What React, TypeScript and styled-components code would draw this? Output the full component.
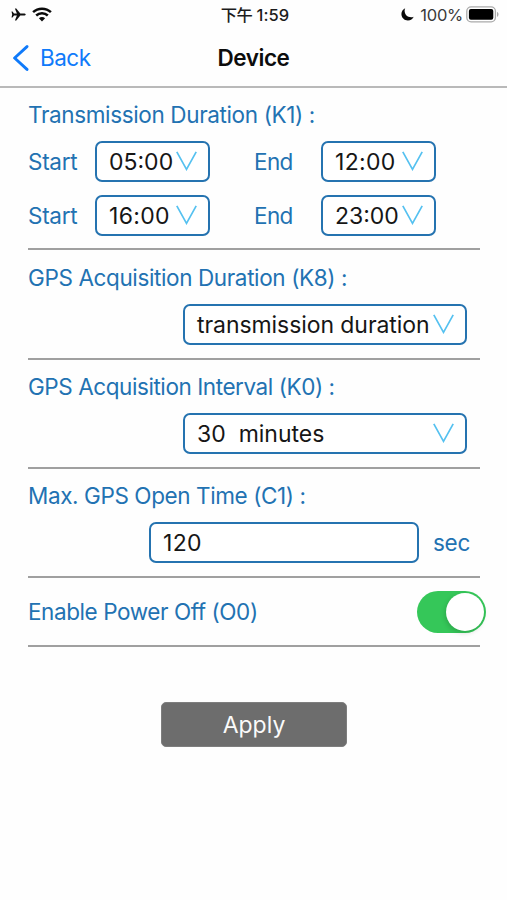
import React, { useState } from 'react';
import styled, { createGlobalStyle } from 'styled-components';

const Global = createGlobalStyle`
  * { box-sizing: border-box; }
  html, body { margin: 0; background: #fefefe; }
  body { font-family: Inter, "Noto Sans CJK TC", "Liberation Sans", sans-serif; }
`;

const Screen = styled.div`
  width: 507px;
  height: 900px;
  overflow: hidden;
  background: #fefefe;
  display: flex;
  flex-direction: column;
`;

const StatusBar = styled.header`
  height: 30px;
  flex: none;
  display: grid;
  grid-template-columns: 1fr auto 1fr;
  align-items: center;
  padding: 0 8px 0 11px;
  font-size: 16.5px;
  line-height: 30px;
  color: #1c1c1c;
`;

const StatusGroup = styled.div<{ $end?: boolean }>`
  display: flex;
  align-items: center;
  height: 30px;
  gap: ${(p) => (p.$end ? 0 : 6)}px;
  padding-bottom: 1px;
  justify-content: ${(p) => (p.$end ? 'flex-end' : 'flex-start')};
  svg { display: block; flex: none; }
`;

const Clock = styled.div`
  display: flex;
  gap: 4px;
  font-weight: 500;
  letter-spacing: 0.1px;
`;

const Meridiem = styled.span`
  font-family: "Noto Sans CJK TC", sans-serif;
  font-size: 16.3px;
  line-height: 28px;
  letter-spacing: -0.4px;
`;

const Percent = styled.span`
  margin: 0 3px 0 6px;
  color: #3a3a3a;
  letter-spacing: -0.25px;
`;

const NavBar = styled.nav`
  height: 58px;
  flex: none;
  display: grid;
  grid-template-columns: 1fr auto 1fr;
  align-items: center;
  padding: 0 12px;
  border-bottom: 2px solid #b9b9b9;
`;

const BackButton = styled.button`
  display: flex;
  align-items: center;
  gap: 11px;
  padding: 0;
  border: 0;
  background: none;
  color: #0f7afa;
  font: 400 22.5px/30px Inter, sans-serif;
  letter-spacing: -0.5px;
`;

const Title = styled.h1`
  margin: 0;
  font-size: 22.5px;
  line-height: 30px;
  font-weight: 600;
  color: #0c0c0c;
  letter-spacing: -0.45px;
`;

const Form = styled.main`
  width: 452px;
  margin-left: 28px;
  display: flex;
  flex-direction: column;
`;

const Section = styled.section<{ $height: number; $top?: number }>`
  height: ${(p) => p.$height}px;
  border-bottom: 2px solid #a0a0a0;
  padding-top: ${(p) => p.$top ?? 13}px;
`;

const SwitchSection = styled(Section)`
  padding: 0;
  display: flex;
  align-items: center;
  justify-content: space-between;
`;

const Label = styled.div<{ $track?: number }>`
  font-size: 22.5px;
  line-height: 28px;
  white-space: pre;
  color: #2272b2;
  letter-spacing: ${(p) => p.$track ?? -0.3}px;
`;

const TimeGrid = styled.div`
  display: grid;
  grid-template-columns: 67px 159px 67px 115px;
  row-gap: 13px;
  align-items: center;
  margin-top: 12px;
`;

const FieldRow = styled.div<{ $right: number }>`
  display: flex;
  justify-content: flex-end;
  align-items: center;
  gap: 14px;
  margin-top: 12px;
  margin-right: ${(p) => p.$right}px;
`;

const Field = styled.div<{ $width: number }>`
  width: ${(p) => p.$width}px;
  height: 41px;
  border: 2px solid #2573b0;
  border-radius: 7px;
  padding: 0 11px 0 12px;
  display: flex;
  align-items: center;
  justify-content: space-between;
  background: #fff;
  svg { display: block; flex: none; margin-bottom: 1px; }
`;

const Value = styled.span<{ $track: number }>`
  font-size: 23px;
  line-height: 36px;
  white-space: pre;
  color: #161616;
  letter-spacing: ${(p) => p.$track}px;
`;

const NumberInput = styled.input`
  width: 270px;
  height: 41px;
  border: 2px solid #2573b0;
  border-radius: 7px;
  padding: 0 12px;
  background: #fff;
  outline: none;
  color: #161616;
  font: 400 23px/36px Inter, sans-serif;
  letter-spacing: 0.3px;
`;

const Toggle = styled.button<{ $on: boolean }>`
  width: 69px;
  height: 42px;
  flex: none;
  margin-right: -6px;
  padding: 2px;
  border: 0;
  border-radius: 21px;
  display: flex;
  justify-content: ${(p) => (p.$on ? 'flex-end' : 'flex-start')};
  background: ${(p) => (p.$on ? '#35c759' : '#e5e5ea')};
`;

const Knob = styled.span`
  width: 38px;
  height: 38px;
  border-radius: 50%;
  background: #fff;
  box-shadow: -1px 2px 5px rgba(0, 0, 0, 0.16);
`;

const ApplyButton = styled.button`
  width: 186px;
  height: 45px;
  margin: 55px 0 0 161px;
  padding: 1px 0 0;
  border: 1px solid #7e7e7e;
  border-radius: 5px;
  background: #6d6d6d;
  color: #fafafa;
  font: 400 23px/42px Inter, sans-serif;
  letter-spacing: 0;
`;

const Chevron = () => (
  <svg width="21" height="20" viewBox="0 0 21 20" fill="none">
    <path d="M0.8 0.8 L10.5 18.3 L20.2 0.8" stroke="#55c1f0" strokeWidth="1.7" />
  </svg>
);

const TimeSelect = ({ value, track }: { value: string; track: number }) => (
  <Field $width={115}>
    <Value $track={track}>{value}</Value>
    <Chevron />
  </Field>
);

const Plane = () => (
  <svg width="15" height="13" viewBox="0 0 15 13" fill="#111">
    <path d="M14.7 6.5C14.7 5.9 13.8 5.5 12.9 5.5H9.3L5.3 0.5H3.9L5.9 5.5H3L1.5 3.6H0.5L1.2 6.5L0.5 9.4H1.5L3 7.5H5.9L3.9 12.5H5.3L9.3 7.5H12.9C13.8 7.5 14.7 7.1 14.7 6.5Z" />
  </svg>
);

const Wifi = () => (
  <svg width="20" height="15" viewBox="0 0 20 15" fill="none">
    <path d="M1.1 5.2C6 .5 14 .5 18.9 5.2" stroke="#0b0b0b" strokeWidth="2.5" />
    <path d="M4.2 8.5C7.4 5.5 12.6 5.5 15.8 8.5" stroke="#0b0b0b" strokeWidth="2.5" />
    <path d="M10 14.4L6.9 11.3C8.6 9.7 11.4 9.7 13.1 11.3Z" fill="#0b0b0b" />
  </svg>
);

const Moon = () => (
  <svg width="13" height="13" viewBox="0 0 13 13" fill="#080808">
    <path d="M4.2 0.3C2 1.2 0.4 3.5 0.4 6.1C0.4 9.7 3.3 12.6 6.9 12.6C9.5 12.6 11.8 11 12.7 8.7C11.9 9.1 11 9.3 10.1 9.3C6.4 9.3 3.6 6.5 3.6 2.8C3.6 1.9 3.8 1.1 4.2 0.3Z" />
  </svg>
);

const Battery = () => (
  <svg width="33" height="17" viewBox="0 0 33 17">
    <rect x="0.8" y="0.9" width="28.6" height="15" rx="4.3" fill="#fff" stroke="#aaa" strokeWidth="1.3" />
    <rect x="2.9" y="3" width="24.4" height="10.8" rx="2" fill="#000" />
    <path d="M31 6C33 6.7 33 10 31 10.8Z" fill="#aaa" />
  </svg>
);

export default function App() {
  const [powerOff, setPowerOff] = useState(true);
  const [openTime, setOpenTime] = useState('120');

  return (
    <>
      <Global />
      <Screen>
        <StatusBar>
          <StatusGroup>
            <Plane />
            <Wifi />
          </StatusGroup>
          <Clock>
            <Meridiem>下午</Meridiem>
            <span>1:59</span>
          </Clock>
          <StatusGroup $end>
            <Moon />
            <Percent>100%</Percent>
            <Battery />
          </StatusGroup>
        </StatusBar>
        <NavBar>
          <BackButton>
            <svg width="17" height="26" viewBox="0 0 17 26" fill="none">
              <path d="M15 1.6L2.6 13L15 24.4" stroke="#0f7afa" strokeWidth="2.9" strokeLinecap="round" strokeLinejoin="round" />
            </svg>
            Back
          </BackButton>
          <Title>Device</Title>
        </NavBar>
        <Form>
          <Section $height={162}>
            <Label $track={-0.36}>Transmission Duration (K1) :</Label>
            <TimeGrid>
              <Label>Start</Label>
              <TimeSelect value="05:00" track={0} />
              <Label $track={-0.6}>End</Label>
              <TimeSelect value="12:00" track={0.3} />
              <Label>Start</Label>
              <TimeSelect value="16:00" track={0.3} />
              <Label $track={-0.6}>End</Label>
              <TimeSelect value="23:00" track={0} />
            </TimeGrid>
          </Section>
          <Section $height={110} $top={14}>
            <Label $track={-0.38}>GPS Acquisition Duration (K8) :</Label>
            <FieldRow $right={13}>
              <Field $width={284}>
                <Value $track={-0.07}>transmission duration</Value>
                <Chevron />
              </Field>
            </FieldRow>
          </Section>
          <Section $height={109}>
            <Label $track={-0.43}>GPS Acquisition Interval (K0) :</Label>
            <FieldRow $right={13}>
              <Field $width={284}>
                <Value $track={0}>{'30  minutes'}</Value>
                <Chevron />
              </Field>
            </FieldRow>
          </Section>
          <Section $height={109}>
            <Label $track={-0.4}>Max. GPS Open Time (C1) :</Label>
            <FieldRow $right={10}>
              <NumberInput value={openTime} onChange={(e) => setOpenTime(e.target.value)} />
              <Label>sec</Label>
            </FieldRow>
          </Section>
          <SwitchSection $height={69}>
            <Label $track={-0.42}>Enable Power Off (O0)</Label>
            <Toggle $on={powerOff} onClick={() => setPowerOff(!powerOff)}>
              <Knob />
            </Toggle>
          </SwitchSection>
        </Form>
        <ApplyButton>Apply</ApplyButton>
      </Screen>
    </>
  );
}
